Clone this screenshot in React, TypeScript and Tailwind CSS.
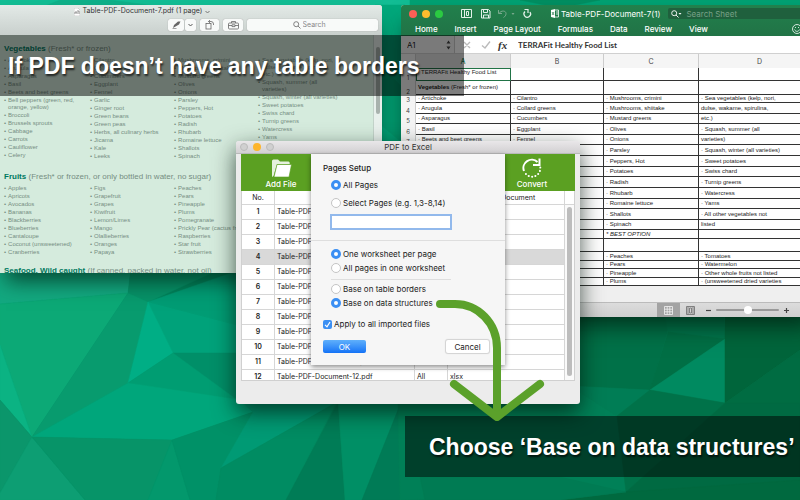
import type { ReactNode } from "react";

const facets = [
  { points: "0,0 410,0 410,60 0,60", fill: "#12bd94" },
  { points: "60,0 110,0 170,8 40,8", fill: "#0fb089" },
  { points: "410,0 800,0 800,40 410,40", fill: "#00a173" },
  { points: "520,0 600,0 560,8", fill: "#008f62" },
  { points: "375,5 405,5 405,145 375,145", fill: "#00a97c" },
  { points: "375,60 405,90 405,145 375,120", fill: "#009f73" },
  { points: "0,260 132,260 128,293 0,304", fill: "#13a980" },
  { points: "132,260 240,260 148,302 128,293", fill: "#079268" },
  { points: "0,304 128,293 32,437 0,345", fill: "#0ca976" },
  { points: "0,345 32,437 0,400", fill: "#0bb383" },
  { points: "0,400 32,437 0,493", fill: "#0b966b" },
  { points: "128,293 148,302 128,383 32,437", fill: "#089b6e" },
  { points: "240,270 240,326 148,302", fill: "#009c74" },
  { points: "148,302 240,326 240,353 173,353", fill: "#00a27a" },
  { points: "148,302 173,353 128,383", fill: "#00ae85" },
  { points: "173,353 240,353 240,402", fill: "#008f68" },
  { points: "128,383 173,353 240,402", fill: "#009d72" },
  { points: "32,437 128,383 240,400 253,412 172,440", fill: "#00a67b" },
  { points: "32,437 85,500 0,500 0,493", fill: "#0d9e73" },
  { points: "32,437 172,440 148,500 85,500", fill: "#079468" },
  { points: "172,440 190,500 148,500", fill: "#03986c" },
  { points: "172,440 253,412 221,468 216,500 190,500", fill: "#009167" },
  { points: "253,412 240,400 340,400 221,468", fill: "#009a74" },
  { points: "221,468 336,403 286,500 216,500", fill: "#008c62" },
  { points: "338,403 345,500 286,500", fill: "#007c56" },
  { points: "338,400 402,400 362,500 345,500", fill: "#008f65" },
  { points: "402,400 425,500 362,500", fill: "#007b56" },
  { points: "398,400 580,386 617,416 626,492 400,500", fill: "#008057" },
  { points: "570,300 662,300 668,330 650,390 570,386", fill: "#007148" },
  { points: "662,300 723,300 725,339 668,332", fill: "#00754c" },
  { points: "668,332 725,339 650,390", fill: "#006f45" },
  { points: "725,339 725,403 650,390", fill: "#008a60" },
  { points: "725,300 800,300 800,350 725,403", fill: "#00653b" },
  { points: "800,350 800,403 725,403", fill: "#006c42" },
  { points: "570,386 650,390 617,416", fill: "#007d55" },
  { points: "650,390 725,403 626,492 617,416", fill: "#007249" },
  { points: "725,403 800,403 800,500 626,492", fill: "#006a42" },
  { points: "626,492 560,500 800,500 800,480", fill: "#00693f" },
  { points: "420,477 560,477 626,492 560,500 425,500", fill: "#007b53" },
];

const vegetables = [
  ["Artichoke", "Arugula", "Asparagus", "Basil", "Beets and beet greens", "Bell peppers (green, red,\norange, yellow)", "Broccoli", "Brussels sprouts", "Cabbage", "Carrots", "Cauliflower", "Celery"],
  ["Cilantro", "Collard greens", "Cucumbers", "Eggplant", "Fennel", "Garlic", "Ginger root", "Green beans", "Green peas", "Herbs, all culinary herbs", "Jicama", "Kale", "Leeks"],
  ["Mushrooms, crimini", "Mushrooms, shiitake", "Mustard greens", "Olives", "Onions", "Parsley", "Peppers, Hot", "Potatoes", "Radish", "Rhubarb", "Romaine lettuce", "Shallots", "Spinach"],
  ["Sea vegetables (kelp, nori,\ndulse, wakame, spirulina,\netc.)", "Squash, summer (all\nvarieties)", "Squash, winter (all varieties)", "Sweet potatoes", "Swiss chard", "Turnip greens", "Watercress", "Yams"],
];

const fruits = [
  ["Apples", "Apricots", "Avocados", "Bananas", "Blackberries", "Blueberries", "Cantaloupe", "Coconut (unsweetened)", "Cranberries"],
  ["Figs", "Grapefruit", "Grapes", "Kiwifruit", "Lemon/Limes", "Mango", "Olallieberries", "Oranges", "Papaya"],
  ["Peaches", "Pears", "Pineapple", "Plums", "Pomegranate", "Prickly Pear (cactus fruit)", "Raspberries", "Star fruit", "Strawberries"],
];

const sheetRows = [
  { h: "h-[13px]", cells: ["TERRAFit Healthy Food List", "", "", ""] },
  { h: "h-[14px]", cells: ["Vegetables", "", "", ""] },
  { h: "h-[8px]", cells: ["· Artichoke", "· Cilantro", "· Mushrooms, crimini", "· Sea vegetables (kelp, nori,"] },
  { h: "h-[11px]", cells: ["· Arugula", "· Collard greens", "· Mushrooms, shiitake", "dulse, wakame, spirulina,"] },
  { h: "h-[10px]", cells: ["· Asparagus", "· Cucumbers", "· Mustard greens", "etc.)"] },
  { h: "h-[11px]", cells: ["· Basil", "· Eggplant", "· Olives", "· Squash, summer (all"] },
  { h: "h-[10px]", cells: ["· Beets and beet greens", "· Fennel", "· Onions", "varieties)"] },
  { h: "h-[11px]", cells: ["", "", "· Parsley", "· Squash, winter (all varieties)"] },
  { h: "h-[11px]", cells: ["", "", "· Peppers, Hot", "· Sweet potatoes"] },
  { h: "h-[10px]", cells: ["", "", "· Potatoes", "· Swiss chard"] },
  { h: "h-[11px]", cells: ["", "", "· Radish", "· Turnip greens"] },
  { h: "h-[11px]", cells: ["", "", "· Rhubarb", "· Watercress"] },
  { h: "h-[10px]", cells: ["", "", "· Romaine lettuce", "· Yams"] },
  { h: "h-[11px]", cells: ["", "", "· Shallots", "· All other vegetables not"] },
  { h: "h-[10px]", cells: ["", "", "· Spinach", "listed"] },
  { h: "h-[9px]", cells: ["", "", "* BEST OPTION", ""] },
  { h: "h-[13px]", cells: ["", "", "", ""] },
  { h: "h-[9px]", cells: ["", "", "· Peaches", "· Tomatoes"] },
  { h: "h-[8px]", cells: ["", "", "· Pears", "· Watermelon"] },
  { h: "h-[9px]", cells: ["", "", "· Pineapple", "· Other whole fruits not listed"] },
  { h: "h-[8px]", cells: ["", "", "· Plums", "· (unsweetened dried varieties"] },
];

const files = [1, 2, 3, 4, 5, 6, 7, 8, 9, 10, 11, 12];

function Wallpaper() {
  return (
    <svg className="absolute inset-0 h-full w-full" viewBox="0 0 800 500" preserveAspectRatio="none">
      <rect width="800" height="500" fill="#00835b" />
      {facets.map((f) => (
        <polygon key={f.points} points={f.points} fill={f.fill} stroke={f.fill} strokeWidth="0.5" />
      ))}
    </svg>
  );
}

function BulletColumns({ columns }: { columns: string[][] }) {
  return (
    <div className="grid grid-cols-[86px_84px_84px_84px] text-[6px] leading-[7px] text-[#758e82]">
      {columns.map((items, i) => (
        <ul key={i} className="flex flex-col gap-px">
          {items.map((item) => (
            <li key={item} className="flex gap-[2px] whitespace-pre">
              <span>•</span>
              <span>{item}</span>
            </li>
          ))}
        </ul>
      ))}
    </div>
  );
}

function SectionTitle({ name, note }: { name: string; note: string }) {
  return (
    <h2 className="text-[8px] leading-[10px] whitespace-nowrap text-[#758e82]">
      <b className="text-[#00795f]">{name}</b> {note}
    </h2>
  );
}

function PdfWindow() {
  const tool = "flex h-3 items-center justify-center rounded-[2px] bg-[#f8faf9] text-[#666] shadow-[0_0_1px_#888]";
  return (
    <section className="absolute top-[5px] left-0 h-[268px] w-[382px] overflow-hidden rounded-tr-[3px] bg-[#d5ebdd] shadow-[0_14px_20px_-6px_rgba(0,40,25,0.75)]">
      <header className="flex h-[30px] flex-col bg-linear-to-b from-[#e3eae7] to-[#c9d0cd]">
        <div className="flex h-[13px] items-center justify-center gap-[3px] pr-[98px] font-[Inter,sans-serif] text-[7px] text-[#333]">
          <svg width="6" height="8" viewBox="0 0 6 8">
            <path d="M0 0h4l2 2v6H0z" fill="#fff" stroke="#aaa" strokeWidth="0.5" />
            <path d="M1 6V4h2v2M3 3h2v3" stroke="#777" strokeWidth="0.8" fill="none" />
          </svg>
          <span>Table-PDF-Document-7.pdf (1 page)</span>
          <svg width="5" height="4" viewBox="0 0 5 4" fill="none" stroke="#777">
            <path d="M0.5 1l2 2 2-2" />
          </svg>
        </div>
        <div className="flex items-center gap-1 pt-px pr-1 pl-[168px]">
          <div className="flex gap-px">
            <button aria-label="Markup" className={`${tool} w-4`}>
              <svg width="9" height="8" viewBox="0 0 9 8" fill="#666">
                <path d="M1 7l1-3 4-3.500 2.500 0L7 3.500 3.500 5.500z" />
                <path d="M0.500 7.500h4" stroke="#666" strokeWidth="0.6" />
              </svg>
            </button>
            <button aria-label="Markup options" className={`${tool} w-[11px]`}>
              <svg width="5" height="4" viewBox="0 0 5 4" fill="none" stroke="#555">
                <path d="M0.5 1l2 2 2-2" />
              </svg>
            </button>
          </div>
          <button aria-label="Rotate" className={`${tool} w-[19px]`}>
            <svg width="10" height="10" viewBox="0 0 10 10" fill="none" stroke="#666" strokeWidth="0.8">
              <rect x="1" y="3.500" width="5" height="5.500" />
              <path d="M3.500 1.500h2.500a2.500 2.500 0 0 1 2.500 2.500v1M5 0L3.500 1.500 5 3" />
            </svg>
          </button>
          <button aria-label="Toolbox" className={`${tool} w-5`}>
            <svg width="11" height="10" viewBox="0 0 11 10" fill="none" stroke="#666" strokeWidth="0.8">
              <rect x="0.500" y="3" width="10" height="6" rx="1" />
              <path d="M3.500 3V1.500h4V3M0.500 5.500h3.500M7 5.500h3.500M4 4.800h3v1.800H4z" />
            </svg>
          </button>
          <label className={`${tool} flex-1 gap-[2px]`}>
            <svg width="8" height="8" viewBox="0 0 8 8" fill="none" stroke="#666" strokeWidth="0.8">
              <circle cx="3.200" cy="3.200" r="2.500" />
              <path d="M5 5l2.500 2.500" />
            </svg>
            <input
              type="text"
              aria-label="Search document"
              placeholder="Search"
              className="w-[30px] font-[Inter,sans-serif] text-[7px] leading-[10px] outline-none placeholder:text-[#888]"
            />
          </label>
        </div>
      </header>
      <div className="flex">
        <div className="flex-1 overflow-hidden pt-[9px] pl-1">
          <SectionTitle name="Vegetables" note="(Fresh* or frozen)" />
          <div className="h-[118px] pt-[3px]">
            <BulletColumns columns={vegetables} />
          </div>
          <SectionTitle name="Fruits" note="(Fresh* or frozen, or only bottled in water, no sugar)" />
          <div className="h-[84px] pt-[3px]">
            <BulletColumns columns={fruits} />
          </div>
          <SectionTitle name="Seafood, Wild caught" note="(If canned, packed in water, not oil)" />
        </div>
        <div className="flex w-[9px] justify-center border-l border-[#c3d3ca] bg-[#e9f1ed] pt-3">
          <div className="h-[67px] w-1 rounded-full bg-[#a9b3ae]" />
        </div>
      </div>
    </section>
  );
}

function ExcelWindow() {
  return (
    <section className="absolute top-[5px] -right-5 left-[401px] overflow-hidden rounded-t-[3px] bg-[#efefef] shadow-[0_14px_22px_-6px_rgba(0,30,15,0.8)]">
      <header className="bg-linear-to-b from-[#21804c] to-[#217346] font-[Inter,sans-serif] text-[8px] text-white">
        <div className="flex h-[17px] items-center">
          <div className="flex gap-[5px] pl-2">
            <span className="size-2 rounded-full bg-[#fb5f56]" />
            <span className="size-2 rounded-full bg-[#fdbd2e]" />
            <span className="size-2 rounded-full bg-[#2bca42]" />
          </div>
          <svg className="ml-[18px]" width="76" height="12" viewBox="0 0 76 12" fill="none" stroke="#e3f1e9">
            <path d="M0.500 1.500h10v8h-10zM3.500 1.500v8M5.500 3.500h2v4h-2z" strokeWidth="1" />
            <path d="M20.500 1.500h7l1.500 1.500v7h-8.500zM22.500 1.500v3h4v-3M22.500 10v-3h5v3" />
            <path d="M37.500 2v3.500h3.500M38 5.500c2-3.500 7-3 7 0 0 2-1 3-2.500 4" stroke="#79a98d" />
            <path d="M50.500 5l1.500 2 1.500-2z" fill="#79a98d" stroke="none" />
            <path d="M64 3.500a3.300 3.300 0 1 0 5 0.500M63.500 1.500h3.500v3.500" strokeWidth="1.200" />
          </svg>
          <svg className="ml-[14px]" width="8" height="9" viewBox="0 0 8 9">
            <path d="M0 1l4-1v9L0 8z" fill="#fff" />
            <path d="M4 1h3.500v7H4M5 3h2M5 5h2" stroke="#fff" fill="none" strokeWidth="0.8" />
            <path d="M1 3l2 3M3 3L1 6" stroke="#217346" strokeWidth="0.7" />
          </svg>
          <span className="ml-[2px] whitespace-nowrap">Table-PDF-Document-7(1)</span>
          <label className="ml-2 flex h-[11px] flex-1 items-center gap-1 rounded-[2px] bg-[#1f603d] pl-[3px]">
            <svg width="11" height="8" viewBox="0 0 11 8" fill="none" stroke="#fff" strokeWidth="0.9">
              <circle cx="3.200" cy="3.200" r="2.500" />
              <path d="M5 5l2.500 2.500" />
              <path d="M7.500 3h3l-1.500 1.800z" fill="#fff" stroke="none" />
            </svg>
            <input
              type="text"
              aria-label="Search Sheet"
              placeholder="Search Sheet"
              className="w-20 text-[8px] leading-[10px] outline-none placeholder:text-[#79a187]"
            />
          </label>
        </div>
        <nav className="flex h-[14px] items-center gap-[17px] pl-[14px] font-medium whitespace-nowrap">
          <button>Home</button>
          <button>Insert</button>
          <button>Page Layout</button>
          <button>Formulas</button>
          <button>Data</button>
          <button>Review</button>
          <button>View</button>
          <svg className="mr-[18px] ml-auto" width="10" height="10" viewBox="0 0 10 10" fill="none" stroke="#fff" strokeWidth="0.8">
            <circle cx="5" cy="5" r="4.500" />
            <path d="M2.500 5.500c1 2.500 4 2.500 5 0M3.500 3v1M6.500 3v1" />
          </svg>
        </nav>
      </header>
      <div className="flex h-[18px] items-center border-b border-[#d0d0d0] bg-white">
        <div className="flex h-full w-[54px] items-center justify-between border-r border-[#ccc] bg-[#f4f4f4] pr-[3px] pl-[6px]">
          <input aria-label="Name box" defaultValue="A1" className="w-5 font-[Inter,sans-serif] text-[8px] leading-[10px] text-[#222]" />
          <svg width="5" height="10" viewBox="0 0 5 10" fill="#444">
            <path d="M0.500 3.500L2.500 0.500l2 3zM0.500 6.500l2 3 2-3z" />
          </svg>
        </div>
        <svg className="ml-2" width="30" height="10" viewBox="0 0 30 10" fill="none" stroke="#bbb" strokeWidth="1.400">
          <path d="M1 2l6 6M7 2L1 8M19 5.500l3 2.500 5-6.500" />
        </svg>
        <i className="ml-[5px] w-4 font-['Liberation_Serif',serif] text-[11px] leading-3 font-bold text-[#333]">fx</i>
        <input
          aria-label="Formula bar"
          defaultValue="TERRAFit Healthy Food List"
          className="ml-1 w-40 font-[Lato,sans-serif] text-[8px] leading-[10px] font-bold text-[#333]"
        />
      </div>
      <table className="w-full table-fixed border-separate border-spacing-0 bg-white text-[6px] leading-[7px] text-[#1c1c1c]">
        <colgroup>
          <col className="w-[15px]" />
          <col className="w-[95px]" />
          <col className="w-[93px]" />
          <col className="w-[95px]" />
          <col />
        </colgroup>
        <thead>
          <tr className="h-[14px] bg-[#f5f5f5] font-[Inter,sans-serif] text-[7px] text-[#444]">
            <th className="border-r border-[#ccc] p-0" />
            <th className="border-r border-[#ccc] bg-[#e2e2e2] p-0 font-medium text-[#217346]">A</th>
            <th className="border-r border-[#ccc] p-0 font-normal">B</th>
            <th className="border-r border-[#ccc] p-0 font-normal">C</th>
            <th className="p-0 font-normal">D</th>
          </tr>
        </thead>
        <tbody>
          {sheetRows.map((row, r) => (
            <tr key={r} className={row.h}>
              <th className="border-r border-[#ccc] bg-[#f4f4f4] p-0 text-center align-bottom font-[Inter,sans-serif] font-normal text-[#444]">
                {r + 1}
              </th>
              {row.cells.map((cell, c) => (
                <td
                  key={c}
                  className={
                    r === 0 && c === 0
                      ? "border border-[#217346] p-0 pl-1 align-top whitespace-nowrap"
                      : "border-r border-b border-[#333] p-0 pl-[2px] whitespace-nowrap"
                  }
                >
                  {r === 1 && c === 0 ? (
                    <>
                      <b>Vegetables</b> (Fresh* or frozen)
                    </>
                  ) : r === 15 ? (
                    <i>{cell}</i>
                  ) : (
                    cell
                  )}
                </td>
              ))}
            </tr>
          ))}
        </tbody>
      </table>
      <footer className="mt-4 flex h-[15px] items-center border-t border-[#bbb] bg-linear-to-b from-[#dcdcdc] to-[#cfcfcf] pl-[256px]">
        <button aria-label="Normal view" className="flex h-full w-[23px] items-center justify-center bg-[#a3a3a3]">
          <svg width="9" height="9" viewBox="0 0 9 9" fill="none" stroke="#f2f2f2" strokeWidth="0.8">
            <path d="M0.500 0.500h8v8h-8zM3.200 0.500v8M5.800 0.500v8M0.500 3.200h8M0.500 5.800h8" />
          </svg>
        </button>
        <button aria-label="Page layout view" className="ml-[6px]">
          <svg width="9" height="9" viewBox="0 0 9 9" fill="none" stroke="#777" strokeWidth="0.9">
            <path d="M0.500 0.500h8v8h-8zM2 0.500v8M7 0.500v8M3.500 2h2v5h-2z" />
          </svg>
        </button>
        <div className="ml-[10px] flex items-center gap-1 text-[#444]">
          <svg width="7" height="7" viewBox="0 0 7 7" stroke="#444" strokeWidth="1.200">
            <path d="M1 3.500h5" />
          </svg>
          <input
            type="range"
            aria-label="Zoom"
            className="h-[2px] w-[63px] appearance-none rounded-full bg-[#999] [&::-webkit-slider-thumb]:size-2 [&::-webkit-slider-thumb]:appearance-none [&::-webkit-slider-thumb]:rounded-full [&::-webkit-slider-thumb]:bg-white"
          />
          <svg width="7" height="7" viewBox="0 0 7 7" stroke="#444" strokeWidth="1.200">
            <path d="M1 3.500h5M3.500 1v5" />
          </svg>
          <span className="ml-[6px] text-[7px]">100%</span>
        </div>
      </footer>
    </section>
  );
}

function Radio({ name, checked, children }: { name: string; checked?: boolean; children: ReactNode }) {
  return (
    <label className="flex items-center gap-[2px]">
      <input
        type="radio"
        name={name}
        defaultChecked={checked}
        className="size-[10px] appearance-none rounded-full border border-[#c4c4c4] bg-white checked:border-[3px] checked:border-[#3b8ff3]"
      />
      <span>{children}</span>
    </label>
  );
}

function PagesSetup() {
  return (
    <form className="absolute top-[13px] left-[75px] w-[194px] bg-[#f6f6f6] pt-[9px] pb-3 font-[Inter,sans-serif] text-[8px] leading-[10px] text-[#222] shadow-[0_2px_5px_rgba(0,0,0,0.45)]">
      <h2 className="pl-3 font-medium">Pages Setup</h2>
      <div className="flex flex-col gap-2 pt-[7px] pl-5">
        <Radio name="pages" checked>All Pages</Radio>
        <Radio name="pages">Select Pages (e.g. 1,3-8,14)</Radio>
      </div>
      <input
        type="text"
        aria-label="Page range"
        className="mt-[6px] ml-[19px] block h-4 w-[122px] border-2 border-[#92b9ec] bg-white px-1"
      />
      <hr className="mt-[10px] border-[#dedede]" />
      <div className="flex flex-col gap-1 pt-2 pl-5">
        <Radio name="sheets" checked>One worksheet per page</Radio>
        <Radio name="sheets">All pages in one worksheet</Radio>
      </div>
      <hr className="mt-[6px] mr-[54px] ml-5 border-[#dedede]" />
      <div className="flex flex-col gap-1 pt-[4px] pl-5">
        <Radio name="base">Base on table borders</Radio>
        <Radio name="base" checked>Base on data structures</Radio>
      </div>
      <label className="mt-[11px] ml-3 flex items-center gap-[2px]">
        <span className="grid">
          <input
            type="checkbox"
            defaultChecked
            className="col-start-1 row-start-1 size-[9px] appearance-none rounded-[2px] bg-[#3b8ff3]"
          />
          <svg className="pointer-events-none col-start-1 row-start-1" width="9" height="9" viewBox="0 0 9 9" fill="none" stroke="#fff" strokeWidth="1.200">
            <path d="M2 4.800l2 2L7 2" />
          </svg>
        </span>
        <span>Apply to all imported files</span>
      </label>
      <div className="mt-[11px] flex justify-between pr-4 pl-3">
        <button type="button" className="h-[13px] w-[43px] rounded-[2px] bg-linear-to-b from-[#5fb0fb] to-[#1272f6] text-white">
          OK
        </button>
        <button type="button" className="h-[13px] w-[43px] rounded-[2px] bg-white shadow-[0_0_1px_1px_rgba(0,0,0,0.15)]">
          Cancel
        </button>
      </div>
    </form>
  );
}

function ConverterWindow() {
  const cell = "border-r border-b border-[#d6d6d6] p-0";
  return (
    <section className="absolute top-[141px] left-[236px] w-[344px] rounded-[3px] bg-[#ececec] px-[5px] pb-[23px] shadow-[0_8px_22px_rgba(0,20,10,0.7)]">
      <header className="-mx-[5px] flex h-[13px] items-center rounded-t-[3px] border-b border-[#b9b9b9] bg-linear-to-b from-[#e9e7e9] to-[#d2d0d2] px-1">
        <div className="flex flex-1 gap-[5px]">
          <span className="size-2 rounded-full border border-[#bbb] bg-[#d0d0d0]" />
          <span className="size-2 rounded-full bg-[#fdb52c]" />
          <span className="size-2 rounded-full border border-[#bbb] bg-[#d0d0d0]" />
        </div>
        <h1 className="font-[Inter,sans-serif] text-[8px] leading-[10px] text-[#333]">PDF to Excel</h1>
        <div className="flex-1" />
      </header>
      <div className="flex h-[37px] justify-between bg-[#5ba022] pr-[3px] font-[Inter,sans-serif] text-[8px] leading-[10px] font-medium text-white">
        <button className="flex w-20 flex-col items-center gap-px pt-1">
          <svg width="21" height="20" viewBox="0 0 21 20" fill="#fff">
            <path d="M1 19V3q0-1.500 1.500-1.500H7l2 2h8.500q1.200 0 1.200 1.500v1H6L2.500 18z" opacity="0.85" />
            <path d="M6 6.500H20.500L18 19H3z" stroke="#5ba022" strokeWidth="0.6" />
          </svg>
          <span>Add File</span>
        </button>
        <button className="flex w-20 flex-col items-center gap-px pt-1">
          <svg width="20" height="20" viewBox="0 0 20 20" fill="none" stroke="#fff" strokeWidth="2">
            <path d="M2 13A8.300 8.300 0 0 1 15.500 4" />
            <path d="M17.500 0.500V7H11" />
            <path d="M18.300 9.500A8.300 8.300 0 0 1 3.500 15.500" strokeDasharray="0.1 3.300" strokeLinecap="round" />
          </svg>
          <span>Convert</span>
        </button>
      </div>
      <div className="flex h-[190px] overflow-hidden border border-t-0 border-[#d0d0d0] bg-white">
        <div className="flex-1">
          <table className="w-full table-fixed border-separate border-spacing-0 font-[Inter,sans-serif] text-[7px] leading-[9px] text-[#222]">
            <colgroup>
              <col className="w-[33px]" />
              <col className="w-[140px]" />
              <col className="w-[33px]" />
              <col />
            </colgroup>
            <thead>
              <tr className="h-[14px]">
                <th className={`${cell} font-normal`}>No.</th>
                <th className={`${cell} font-normal`}>File Name</th>
                <th className={`${cell} font-normal`}>Pages</th>
                <th className={`${cell} font-normal`}>Output Document</th>
              </tr>
            </thead>
            <tbody>
              {files.map((n) => (
                <tr key={n} className={n === 4 ? "h-[15px] bg-[#d9d9d9]" : "h-[15px]"}>
                  <td className={`${cell} pb-px text-center font-semibold`}>{n}</td>
                  <td className={`${cell} pb-[2px] pl-[2px]`}>Table-PDF-Document-{n}.pdf</td>
                  <td className={`${cell} pb-[2px] pl-[2px]`}>All</td>
                  <td className={`${cell} pb-[2px] pl-[2px]`}>xlsx</td>
                </tr>
              ))}
            </tbody>
          </table>
        </div>
        <div className="flex w-[9px] flex-col items-center bg-[#fafafa]">
          <div className="h-[14px] w-full border-b border-[#d6d6d6] bg-white" />
          <div className="mt-[2px] h-[169px] w-[5px] rounded-full bg-[#bdbdbd]" />
        </div>
      </div>
      <PagesSetup />
    </section>
  );
}

export default function App() {
  const caption = "text-[23px] leading-7 font-bold whitespace-nowrap text-white [text-shadow:1px_2px_2px_rgba(0,0,0,0.7)]";
  return (
    <main className="relative h-screen w-full overflow-hidden bg-[#00835b] font-['Liberation_Sans',Arial,sans-serif]">
      <Wallpaper />
      <PdfWindow />
      <ExcelWindow />
      <div className="absolute top-[35px] left-0 flex h-[61px] w-[464px] items-center bg-black/50 pl-2">
        <p className={caption}>If PDF doesn’t have any table borders</p>
      </div>
      <ConverterWindow />
      <div className="absolute top-[416px] right-0 left-[405px] flex h-[61px] items-center bg-black/50 pl-6">
        <p className={caption}>Choose ‘Base on data structures’</p>
      </div>
      {/* arrow from the selected option down to the caption */}
      <svg className="pointer-events-none absolute top-[296px] left-[434px]" width="114" height="128" viewBox="0 0 114 128" fill="none" stroke="#5ba12b" strokeWidth="8" strokeLinecap="round" strokeLinejoin="round">
        <path d="M6 8H21C44 8 63 27 63 52V117" />
        <path d="M20 88L63 121L106 88" />
      </svg>
    </main>
  );
}
